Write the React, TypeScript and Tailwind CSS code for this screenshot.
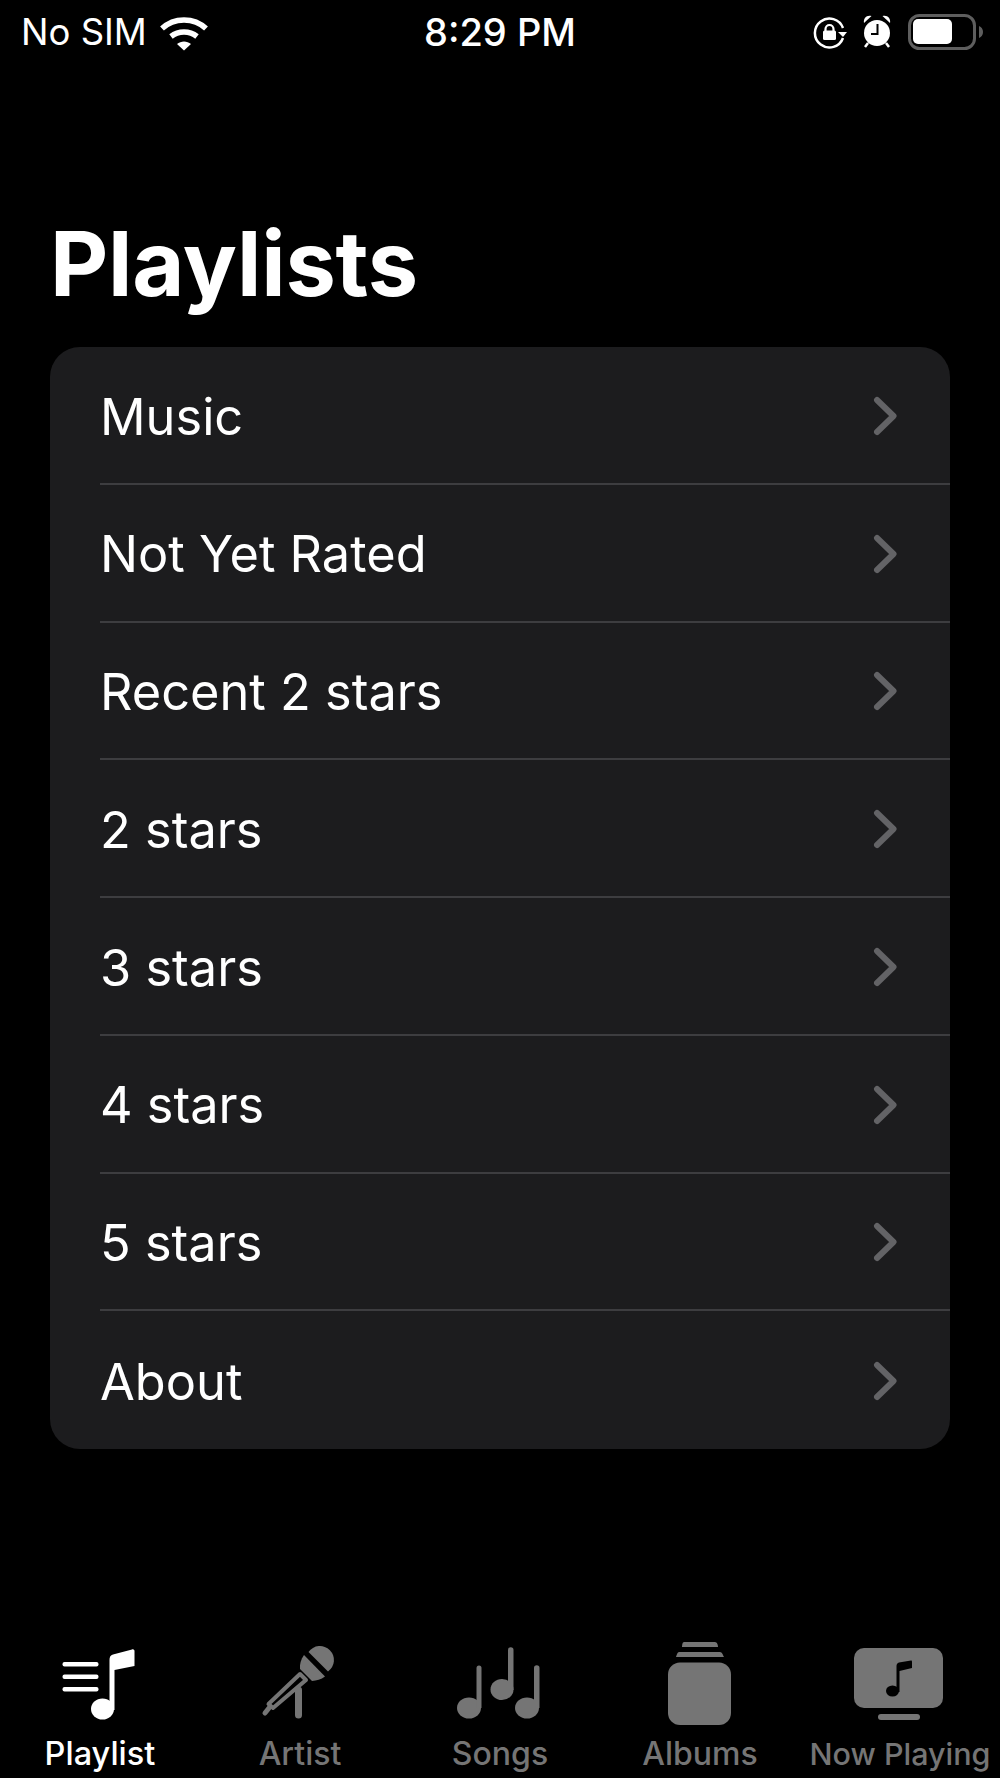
const PLAYLISTS = [
  "Music",
  "Not Yet Rated",
  "Recent 2 stars",
  "2 stars",
  "3 stars",
  "4 stars",
  "5 stars",
  "About",
];

function StatusLeftIcon() {
  return (
    <svg className="w-[60px] h-[50px]" viewBox="155 5 60 50" fill="none">
      <path d="M163 27.500C175 16 195 16 207 27.500" stroke="#fff" strokeWidth="5.500" />
      <path d="M172 35.500C179.500 29.500 190.500 29.500 198 35.500" stroke="#fff" strokeWidth="5.500" />
      <path d="M178 43C182 39.500 188 39.500 192 43L185 49.500Z" fill="#fff" />
    </svg>
  );
}

function StatusRightIcons() {
  return (
    <svg className="w-[190px] h-[60px]" viewBox="800 0 190 60" fill="none">
      {/* rotation lock */}
      <path d="M843 27A14.500 14.500 0 1 0 843 37" stroke="#fff" strokeWidth="2.500" />
      <path d="M838 31H847L843 36Z" fill="#fff" />
      <path d="M825.500 30V28A4 4 0 0 1 833.500 28V30" stroke="#fff" strokeWidth="2.200" />
      <rect x="823" y="29.500" width="13" height="9.500" rx="1.500" fill="#fff" />
      {/* alarm */}
      <circle cx="877" cy="32" r="13" fill="#fff" />
      <path d="M864 22C863 17 867 13.500 871.500 15Z" fill="#fff" />
      <path d="M890 22C891 17 887 13.500 882.500 15Z" fill="#fff" />
      <path d="M868 42L865 46M886 42L889 46" stroke="#fff" strokeWidth="2.500" />
      <path d="M877.500 23V33H871" stroke="#000" strokeWidth="2" />
      {/* battery */}
      <rect x="909.500" y="14.500" width="65" height="33" rx="10" stroke="#5e5e5e" strokeWidth="3" />
      <rect x="913" y="18" width="39" height="25" rx="5" fill="#fff" />
      <path d="M979 25C981.500 26 983 28 983 31C983 34 981.500 36 979 37Z" fill="#5e5e5e" />
    </svg>
  );
}

function PlaylistIcon() {
  return (
    <svg className="w-[120px] h-[90px]" viewBox="40 1635 120 90" fill="#fff">
      <rect x="62.500" y="1662" width="36" height="4.500" rx="2" />
      <rect x="62.500" y="1674.500" width="36" height="4.500" rx="2" />
      <rect x="62.500" y="1687" width="36" height="4.500" rx="2" />
      <ellipse cx="102.500" cy="1709" rx="11.500" ry="10.500" />
      <path d="M109.500 1710V1660C109.500 1657 110.500 1655 113 1654.500L132 1649.500C133.500 1649 134.500 1650 134.500 1651V1666L114.500 1670V1710Z" />
    </svg>
  );
}

function ArtistIcon() {
  return (
    <svg className="w-[120px] h-[90px]" viewBox="240 1635 120 90" fill="#757575">
      <path d="M308.500 1652A14 14 0 1 1 328 1671.500Z" />
      <path d="M304 1655L325 1676.500C321 1679.500 316.500 1680.500 312 1681L300 1669C299.500 1664 301 1659 304 1655Z" />
      <path d="M300 1674L306 1680L273 1708L268.500 1704Z" fill="none" stroke="#757575" strokeWidth="4" strokeLinejoin="round" />
      <path d="M269 1708L265 1713" stroke="#757575" strokeWidth="5" strokeLinecap="round" />
      <path d="M298.500 1690V1715" stroke="#757575" strokeWidth="7" strokeLinecap="round" />
    </svg>
  );
}

function SongsIcon() {
  return (
    <svg className="w-[120px] h-[90px]" viewBox="440 1635 120 90" fill="#757575">
      <ellipse cx="469" cy="1708" rx="12" ry="10.500" />
      <path d="M476.500 1668A2.500 2.500 0 0 1 481.500 1668V1708H476.500Z" />
      <ellipse cx="502" cy="1689.500" rx="11.500" ry="10.500" />
      <path d="M508 1650A2.500 2.500 0 0 1 513.500 1650V1690H508Z" />
      <ellipse cx="527" cy="1708" rx="12" ry="10.500" />
      <path d="M534 1668A2.500 2.500 0 0 1 539.500 1668V1708H534Z" />
    </svg>
  );
}

function AlbumsIcon() {
  return (
    <svg className="w-[120px] h-[90px]" viewBox="640 1635 120 90" fill="#757575">
      <path d="M684 1642H715C717 1642 718 1645 718 1647H682C682 1645 682.500 1642 684 1642Z" />
      <path d="M679 1652H720C722 1652 723 1655 724 1657H676C676.500 1655 677.500 1652 679 1652Z" />
      <rect x="668" y="1662.500" width="63" height="62.500" rx="12" />
    </svg>
  );
}

function NowPlayingIcon() {
  return (
    <svg className="w-[120px] h-[90px]" viewBox="840 1635 120 90" fill="#757575">
      <rect x="854" y="1648" width="89" height="60" rx="10" />
      <rect x="878" y="1714" width="42" height="6" rx="3" />
      <ellipse cx="892.500" cy="1691" rx="6.500" ry="5.500" fill="#000" />
      <path d="M896.500 1692V1666C896.500 1664 897.500 1663 899 1662.500L911 1660.500C911.800 1660.300 912 1661 912 1662V1668L899.500 1671V1692Z" fill="#000" />
    </svg>
  );
}

const TABS = [
  { label: "Playlist", Icon: PlaylistIcon, color: "text-white", size: "text-[32.500px]" },
  { label: "Artist", Icon: ArtistIcon, color: "text-[#757575]", size: "text-[32px]" },
  { label: "Songs", Icon: SongsIcon, color: "text-[#757575]", size: "text-[32px]" },
  { label: "Albums", Icon: AlbumsIcon, color: "text-[#757575]", size: "text-[32px]" },
  { label: "Now Playing", Icon: NowPlayingIcon, color: "text-[#757575]", size: "text-[30.500px]" },
];

export default function App() {
  return (
    <div className="h-[1778px] w-[1000px] bg-black text-white font-['Inter',sans-serif] flex flex-col overflow-hidden">
      {/* Status bar */}
      <div className="h-[62px] grid grid-cols-[1fr_auto_1fr] items-center px-[10px]">
        <div className="flex items-center gap-[7px] pl-[11px]">
          <span className="text-[36.500px] leading-none pt-[2px]">No SIM</span>
          <StatusLeftIcon />
        </div>
        <span className="text-[38px] leading-none font-medium pt-[2px]">8:29 PM</span>
        <div className="flex justify-end">
          <StatusRightIcons />
        </div>
      </div>

      {/* Title */}
      <h1 className="mt-[152px] ml-[50px] text-[90px] leading-[100px] font-bold tracking-[-0.2px]">Playlists</h1>

      {/* List card */}
      <div className="mt-[33px] mx-[50px] h-[1102px] bg-[#1c1c1e] rounded-[30px] grid grid-rows-8">
        {PLAYLISTS.map((name, i) => (
          <div
            key={name}
            className={`ml-[50px] pr-[51px] pt-[2px] flex items-center justify-between ${i < PLAYLISTS.length - 1 ? "border-b-2 border-[#3d3d40]" : ""}`}
          >
            <span className="text-[50.500px] leading-none pt-[2px]">{name}</span>
            <svg className="w-[26px] h-[42px]" viewBox="0 0 26 42" fill="none">
              <path d="M4 5L20.500 21L4 37" stroke="#636366" strokeWidth="6" strokeLinecap="round" strokeLinejoin="round" />
            </svg>
          </div>
        ))}
      </div>

      {/* Tab bar */}
      <div className="mt-auto grid grid-cols-5">
        {TABS.map(({ label, Icon, color, size }) => (
          <div key={label} className="flex flex-col items-center">
            <Icon />
            <span className={`pt-[5px] leading-[48px] font-medium whitespace-nowrap ${size} ${color}`}>
              {label}
            </span>
          </div>
        ))}
      </div>
    </div>
  );
}
